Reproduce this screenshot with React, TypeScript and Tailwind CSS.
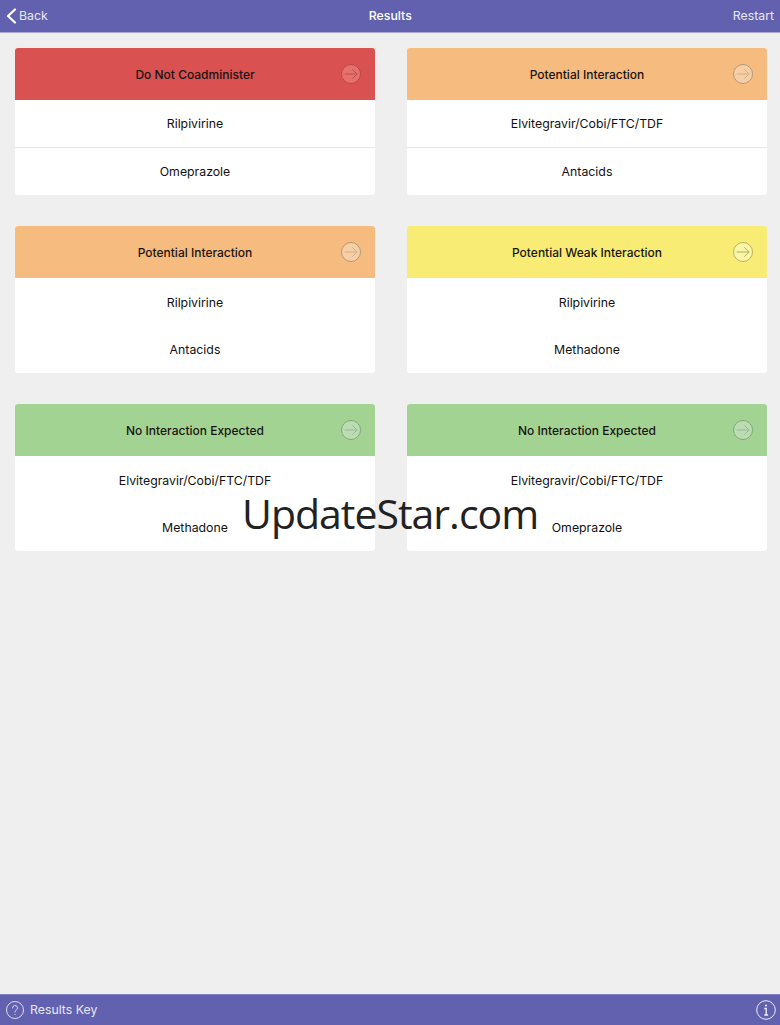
import React from "react";

type CardData = { title: string; head: string; circle: string; ring: string; arrow: string; a: string; b: string; divider: boolean };

const cards: CardData[] = [
  { title: "Do Not Coadminister", head: "bg-[#d95150]", circle: "bg-[#e8706c]", ring: "border-[#b54b4a]", arrow: "#b9504f", a: "Rilpivirine", b: "Omeprazole", divider: true },
  { title: "Potential Interaction", head: "bg-[#f6bb7f]", circle: "bg-[#f8cfa5]", ring: "border-[#b09a7c]", arrow: "#c9b193", a: "Elvitegravir/Cobi/FTC/TDF", b: "Antacids", divider: true },
  { title: "Potential Interaction", head: "bg-[#f6bb7f]", circle: "bg-[#f8cfa5]", ring: "border-[#b09a7c]", arrow: "#c9b193", a: "Rilpivirine", b: "Antacids", divider: false },
  { title: "Potential Weak Interaction", head: "bg-[#f8ec74]", circle: "bg-[#fbf5a6]", ring: "border-[#b8b266]", arrow: "#b3ad66", a: "Rilpivirine", b: "Methadone", divider: false },
  { title: "No Interaction Expected", head: "bg-[#a2d393]", circle: "bg-[#bcdcb2]", ring: "border-[#86a67e]", arrow: "#9db896", a: "Elvitegravir/Cobi/FTC/TDF", b: "Methadone", divider: false },
  { title: "No Interaction Expected", head: "bg-[#a2d393]", circle: "bg-[#bcdcb2]", ring: "border-[#86a67e]", arrow: "#9db896", a: "Elvitegravir/Cobi/FTC/TDF", b: "Omeprazole", divider: false },
];

function Card({ c }: { c: CardData }) {
  return (
    <div className="flex h-[147px] w-[360px] flex-col overflow-hidden rounded-[3px] bg-white">
      <div className={`relative flex h-[52px] items-center justify-center pt-[2px] text-[12px] font-medium text-[#1a1410] ${c.head}`}>
        {c.title}
        <span className={`absolute right-[14px] top-[16px] flex h-[20px] w-[20px] items-center justify-center rounded-full border ${c.circle} ${c.ring}`}>
          <svg width="14" height="12" viewBox="0 0 14 12" fill="none" stroke={c.arrow} strokeWidth="1" strokeLinecap="round" strokeLinejoin="round">
            <path d="M1 6h12M8.500 1.500 13 6l-4.500 4.500" />
          </svg>
        </span>
      </div>
      <div className={`flex h-[48px] items-center justify-center pt-[2px] text-[12.3px] text-[#111] ${c.divider ? "border-b border-[#e6e6e6]" : ""}`}>{c.a}</div>
      <div className="flex h-[47px] items-center justify-center pt-[2px] text-[12.3px] text-[#111]">{c.b}</div>
    </div>
  );
}

export default function App() {
  return (
    <div className="relative flex h-[1025px] w-[780px] flex-col overflow-hidden bg-[#efefef] font-['Inter','Liberation_Sans',sans-serif]">
      <header className="flex h-[33px] shrink-0 items-center justify-between border-b border-[#a9a8d2] bg-[#6161b0] pl-[6px] pr-[6px] text-[12.3px] text-[#e8e8f5]">
        <div className="flex items-center gap-[2px]">
          <svg width="11" height="16" viewBox="0 0 11 16" fill="none" stroke="#ffffff" strokeWidth="2.200" strokeLinecap="round" strokeLinejoin="round">
            <path d="M9 1.500 2 8l7 6.500" />
          </svg>
          <span>Back</span>
        </div>
        <span className="font-medium text-white">Results</span>
        <span>Restart</span>
      </header>

      <main className="grid grid-cols-[360px_360px] gap-x-[32px] gap-y-[31px] px-[15px] pt-[15px]">
        {cards.map((c, i) => (
          <Card key={i} c={c} />
        ))}
      </main>

      <footer className="mt-auto flex h-[31px] shrink-0 items-center justify-between border-t border-[#7f7fc0] bg-[#6161b0] pl-[6px] pr-[4px] text-[12.3px] text-[#e8e8f5]">
        <div className="flex items-center gap-[6px]">
          <svg width="18" height="18" viewBox="0 0 18 18" fill="none" stroke="#dcdcf0" strokeWidth="1">
            <circle cx="9" cy="9" r="8.500" />
            <path d="M6.500 7a2.500 2.500 0 1 1 3.600 2.200c-.8.400-1.100.9-1.100 1.800" strokeLinecap="round" />
            <circle cx="9" cy="13.300" r=".6" fill="#dcdcf0" stroke="none" />
          </svg>
          <span>Results Key</span>
        </div>
        <svg width="20" height="20" viewBox="0 0 20 20" fill="none" stroke="#f0f0fa" strokeWidth="1">
          <circle cx="10" cy="10" r="9.300" />
          <path d="M8.300 8.500H10.200V15M8.300 15h3.800" strokeWidth="1.300" />
          <circle cx="10" cy="5.500" r="1" fill="#f0f0fa" stroke="none" />
        </svg>
      </footer>

      <div className="absolute left-[242px] top-[485px] text-[41px] leading-[56px] tracking-[-1px] text-[#222] font-['Open_Sans',sans-serif]">UpdateStar.com</div>
    </div>
  );
}
